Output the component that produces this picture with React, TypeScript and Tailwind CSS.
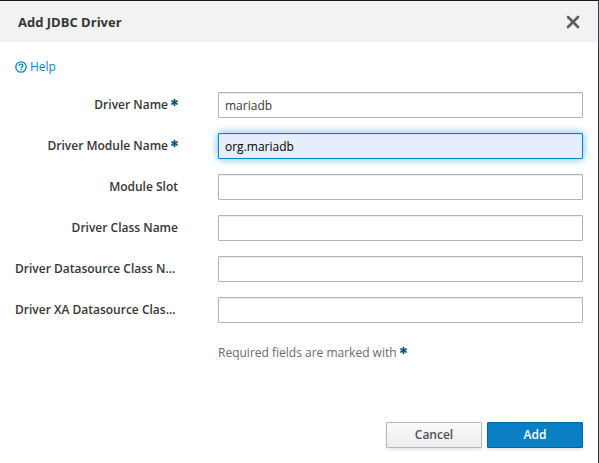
import { useState } from "react";
import { FaAsterisk } from "react-icons/fa";

type Field = {
  id: string;
  label: string;
  required?: boolean;
  value: string;
  active?: boolean;
};

const initialFields: Field[] = [
  { id: "name", label: "Driver Name", required: true, value: "mariadb" },
  { id: "module", label: "Driver Module Name", required: true, value: "org.mariadb", active: true },
  { id: "slot", label: "Module Slot", value: "" },
  { id: "class", label: "Driver Class Name", value: "" },
  { id: "datasource", label: "Driver Datasource Class Name", value: "" },
  { id: "xa", label: "Driver XA Datasource Class Name", value: "" },
];

function RequiredMark() {
  return (
    <FaAsterisk
      aria-hidden="true"
      stroke="currentColor"
      strokeWidth="40"
      className="mb-[7px] ml-[3px] inline-block size-[7px] overflow-visible text-[#00507a]"
    />
  );
}

function HelpIcon() {
  return (
    <svg viewBox="0 0 12 12" className="size-3" fill="none" stroke="currentColor" aria-hidden="true">
      <circle cx="6" cy="6" r="5.2" strokeWidth="1.3" />
      <path d="M4.1 4.8C4.2 3.6 5 3.1 6 3.1s1.9.6 1.9 1.5c0 1.2-1.8 1.2-1.8 2.4" strokeWidth="1.4" />
      <path d="M6.1 7.8v1.4" strokeWidth="1.5" />
    </svg>
  );
}

function CloseIcon() {
  return (
    <svg viewBox="0 0 14 14" className="size-[14px]" fill="none" stroke="currentColor" aria-hidden="true">
      <path d="M2 2l10 10M12 2L2 12" strokeWidth="2.6" strokeLinecap="round" />
    </svg>
  );
}

function FieldRow({ field }: { field: Field }) {
  const [value, setValue] = useState(field.value);
  const look = field.active
    ? "border-[#0088ce] bg-[#e5eefd] text-black shadow-[inset_0_1px_1px_rgba(3,3,3,0.075),0_0_8px_rgba(0,136,206,0.6)]"
    : "border-[#b3b3b3] bg-white text-[#363636] shadow-[inset_0_1px_1px_rgba(3,3,3,0.075)]";
  return (
    <div className="flex items-center gap-10">
      <label htmlFor={field.id} className="h-5 w-[163px] shrink-0 truncate text-right font-semibold">
        {field.label}
        {field.required && <RequiredMark />}
      </label>
      <input
        id={field.id}
        type="text"
        required={field.required}
        value={value}
        onChange={(e) => setValue(e.target.value)}
        className={`h-[26px] min-w-0 flex-1 rounded-[1px] border px-[6px] outline-none ${look}`}
      />
    </div>
  );
}

export default function App() {
  return (
    <div
      role="dialog"
      aria-labelledby="title"
      className="border-t border-r border-t-[#17141f] border-r-[#3a3a3e] bg-white font-['Open_Sans',sans-serif] text-[12px] leading-5 text-[#363636]"
    >
      <header className="flex h-[41px] items-center justify-between bg-[#f2f2f2] px-[18px]">
        <h1 id="title" className="text-[13px] font-bold">Add JDBC Driver</h1>
        <button type="button" aria-label="Close" className="text-[#5c5c5c]">
          <CloseIcon />
        </button>
      </header>
      <form className="p-[15px]" onSubmit={(e) => e.preventDefault()}>
        <a href="#help" className="flex w-fit items-center gap-[3px] text-[#0088ce]">
          <HelpIcon />
          Help
        </a>
        <div className="mt-[15px] flex flex-col gap-[15px]">
          {initialFields.map((field) => (
            <FieldRow key={field.id} field={field} />
          ))}
        </div>
        <p className="mt-5 ml-[203px] h-5 text-[#6a6a6a]">
          Required fields are marked with
          <RequiredMark />
        </p>
        <footer className="mt-[59px] flex justify-end gap-[5px]">
          <button
            type="button"
            className="h-[26px] w-24 rounded-[1px] border border-[#b7b7b7] bg-linear-to-b from-[#fafafa] to-[#ededed] font-semibold text-[#4d5258] shadow-[0_2px_3px_rgba(3,3,3,0.1)]"
          >
            Cancel
          </button>
          <button
            type="submit"
            className="h-[26px] w-24 rounded-[1px] border border-[#00659c] bg-[#0a7fc4] font-semibold text-white shadow-[0_2px_3px_rgba(3,3,3,0.1)]"
          >
            Add
          </button>
        </footer>
      </form>
    </div>
  );
}
